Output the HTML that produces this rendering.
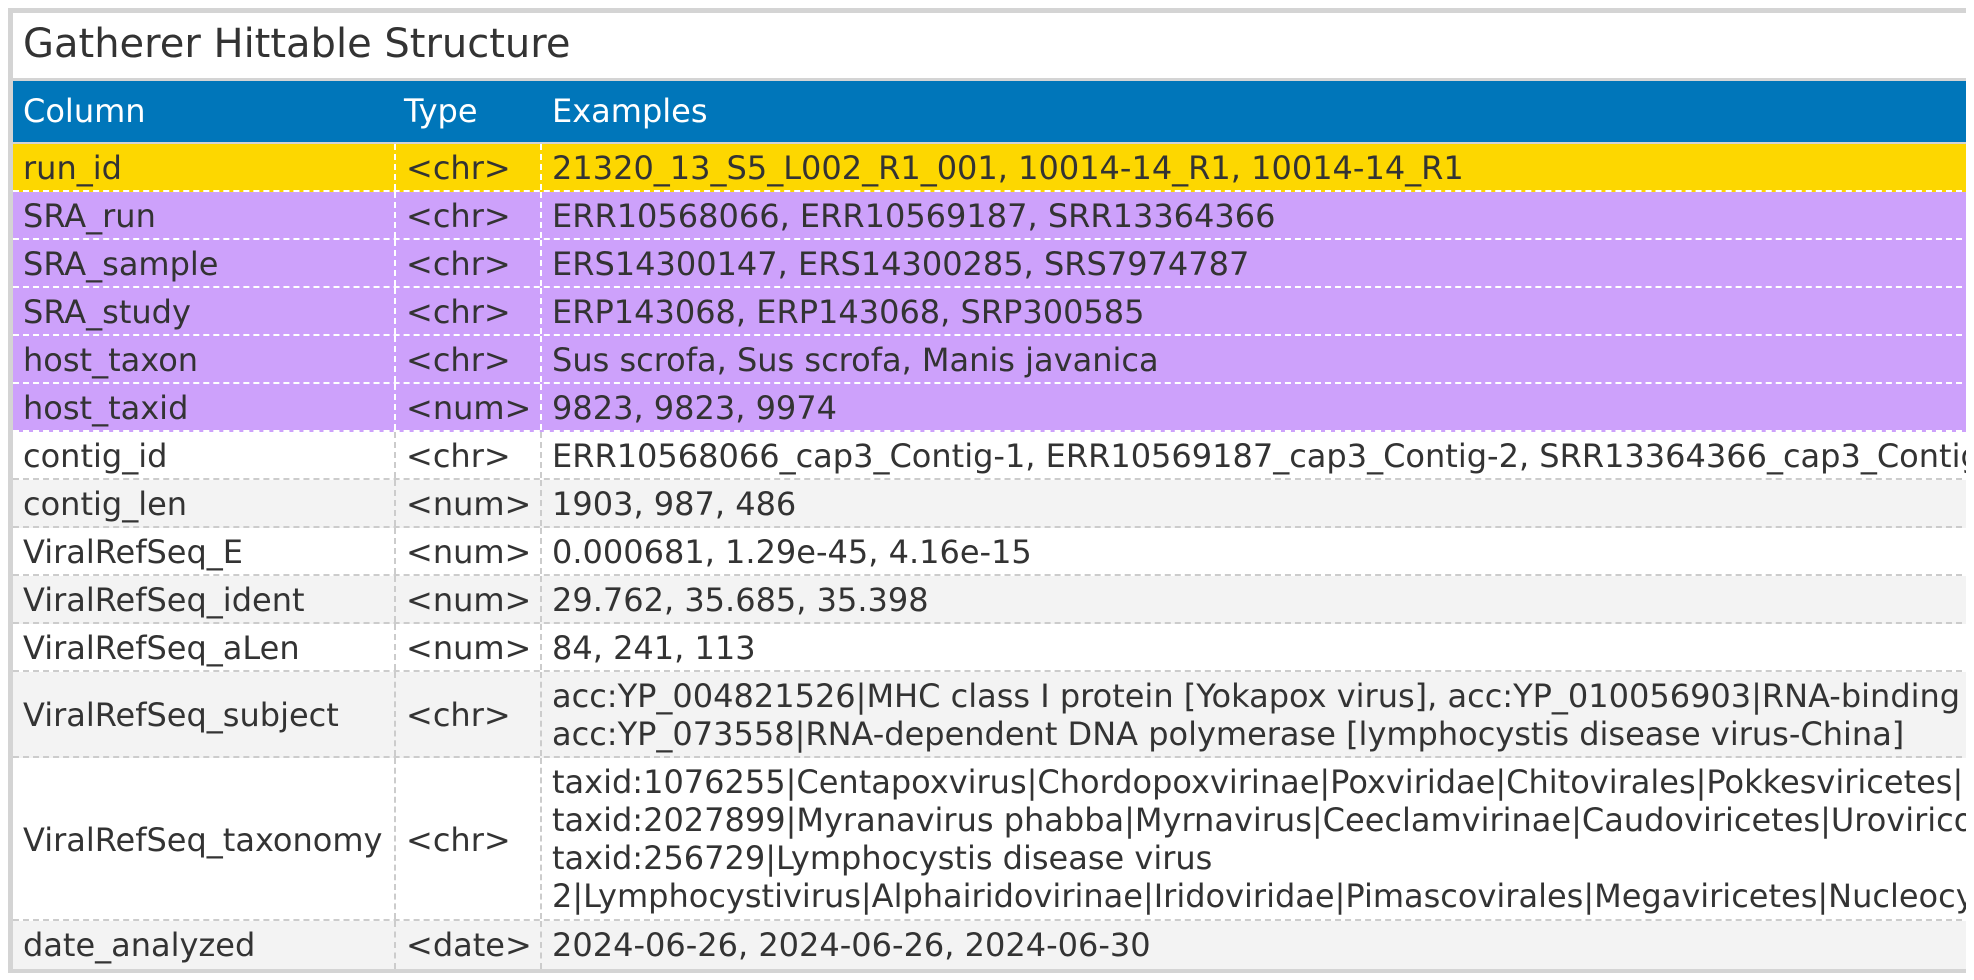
<!DOCTYPE html>
<html><head><meta charset="utf-8">
<style>
html,body{margin:0;padding:0;background:#fff;}
body{width:1974px;height:980px;overflow:hidden;position:relative;font-family:"DejaVu Sans","Liberation Sans",sans-serif;color:#333;}
.clip{position:absolute;left:0;top:0;width:1966px;height:980px;overflow:hidden;}
.frame{position:absolute;left:8px;top:8px;width:2600px;height:955px;border:5px solid #d4d4d4;background:#d4d4d4;}
.title{position:absolute;left:0;top:0;right:0;height:65px;background:#fff;font-size:40px;line-height:52px;padding-left:10px;box-sizing:border-box;padding-top:5px;}
.hdr{position:absolute;left:0;top:68px;right:0;height:61px;background:#0076ba;color:#fff;font-size:32px;}
.hdr span{position:absolute;top:11px;line-height:38px;}
.rows{position:absolute;left:0;top:131px;right:0;}
.r{display:flex;box-sizing:border-box;border-bottom:2px dashed #ccc;font-size:32px;line-height:38px;white-space:nowrap;}
.r div{box-sizing:border-box;padding:5px 10px 3px;}
.r .c1{width:381px;}
.r .c2{width:148px;border-left:2px dashed #ccc;border-right:2px dashed #ccc;padding-left:10px;}
.r .c3{flex:1;padding-left:10px;}
.r .mid{display:flex;align-items:center;}
.y{background:#fdd700;border-color:#fff;}
.p{background:#cda1fb;border-color:#fff;}
.y .c2,.p .c2{border-color:#fff;}
.w{background:#fff;}
.g{background:#f3f3f3;}
.s48{height:48px;}
</style></head><body>
<div class="clip">
<div class="frame">
<div class="title">Gatherer Hittable Structure</div>
<div class="hdr"><span style="left:10px">Column</span><span style="left:391px">Type</span><span style="left:539px">Examples</span></div>
<div class="rows">
<div class="r y s48"><div class="c1">run_id</div><div class="c2">&lt;chr&gt;</div><div class="c3">21320_13_S5_L002_R1_001, 10014-14_R1, 10014-14_R1</div></div>
<div class="r p s48"><div class="c1">SRA_run</div><div class="c2">&lt;chr&gt;</div><div class="c3">ERR10568066, ERR10569187, SRR13364366</div></div>
<div class="r p s48"><div class="c1">SRA_sample</div><div class="c2">&lt;chr&gt;</div><div class="c3">ERS14300147, ERS14300285, SRS7974787</div></div>
<div class="r p s48"><div class="c1">SRA_study</div><div class="c2">&lt;chr&gt;</div><div class="c3">ERP143068, ERP143068, SRP300585</div></div>
<div class="r p s48"><div class="c1">host_taxon</div><div class="c2">&lt;chr&gt;</div><div class="c3">Sus scrofa, Sus scrofa, Manis javanica</div></div>
<div class="r p s48"><div class="c1">host_taxid</div><div class="c2">&lt;num&gt;</div><div class="c3">9823, 9823, 9974</div></div>
<div class="r w s48"><div class="c1">contig_id</div><div class="c2">&lt;chr&gt;</div><div class="c3">ERR10568066_cap3_Contig-1, ERR10569187_cap3_Contig-2, SRR13364366_cap3_Contig-3</div></div>
<div class="r g s48"><div class="c1">contig_len</div><div class="c2">&lt;num&gt;</div><div class="c3">1903, 987, 486</div></div>
<div class="r w s48"><div class="c1">ViralRefSeq_E</div><div class="c2">&lt;num&gt;</div><div class="c3">0.000681, 1.29e-45, 4.16e-15</div></div>
<div class="r g s48"><div class="c1">ViralRefSeq_ident</div><div class="c2">&lt;num&gt;</div><div class="c3">29.762, 35.685, 35.398</div></div>
<div class="r w s48"><div class="c1">ViralRefSeq_aLen</div><div class="c2">&lt;num&gt;</div><div class="c3">84, 241, 113</div></div>
<div class="r g" style="height:86px"><div class="c1 mid">ViralRefSeq_subject</div><div class="c2 mid">&lt;chr&gt;</div><div class="c3">acc:YP_004821526|MHC class I protein [Yokapox virus], acc:YP_010056903|RNA-binding protein [Myranavirus phabba],<br>acc:YP_073558|RNA-dependent DNA polymerase [lymphocystis disease virus-China]</div></div>
<div class="r w" style="height:163px"><div class="c1 mid">ViralRefSeq_taxonomy</div><div class="c2 mid">&lt;chr&gt;</div><div class="c3">taxid:1076255|Centapoxvirus|Chordopoxvirinae|Poxviridae|Chitovirales|Pokkesviricetes|Nucleocytoviricota,<br>taxid:2027899|Myranavirus phabba|Myrnavirus|Ceeclamvirinae|Caudoviricetes|Uroviricota|Heunggongvirae,<br>taxid:256729|Lymphocystis disease virus<br>2|Lymphocystivirus|Alphairidovirinae|Iridoviridae|Pimascovirales|Megaviricetes|Nucleocytoviricota</div></div>
<div class="r g s48" style="border-bottom:none"><div class="c1">date_analyzed</div><div class="c2">&lt;date&gt;</div><div class="c3">2024-06-26, 2024-06-26, 2024-06-30</div></div>
</div>
</div>
</div>
</body></html>
